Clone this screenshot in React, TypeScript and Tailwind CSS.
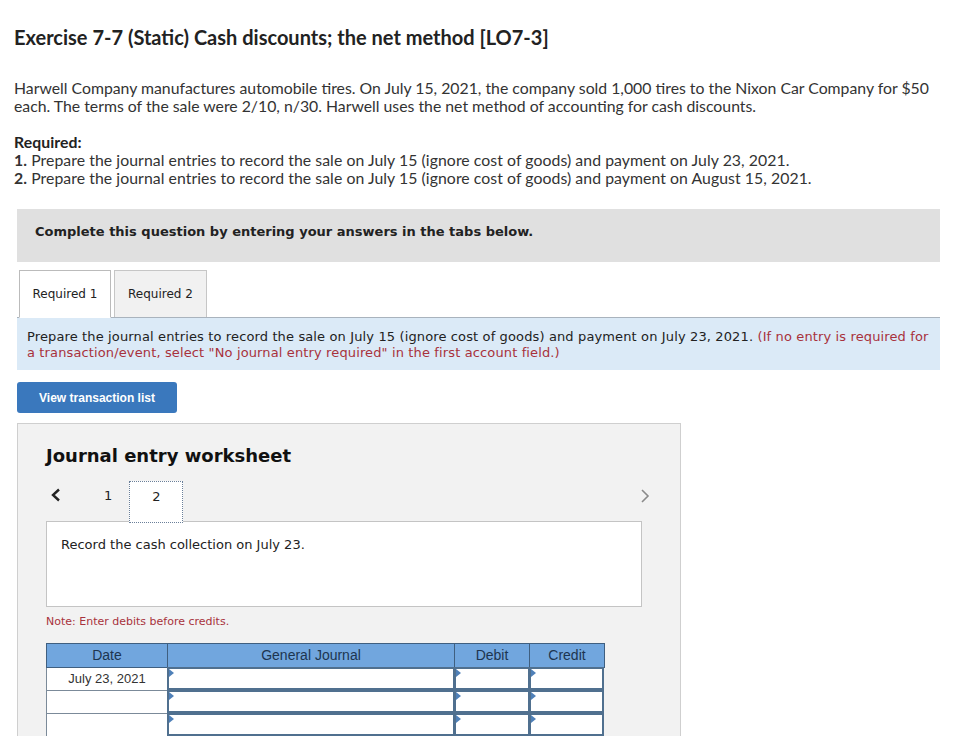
import React from "react";

const sans = { fontFamily: "Lato, 'Open Sans', sans-serif" };
const verdana = { fontFamily: "'DejaVu Sans', Verdana, sans-serif" };
const arial = { fontFamily: "'Liberation Sans', Arial, sans-serif" };

function Marker() {
  return (
    <span className="absolute left-0 top-0 w-0 h-0 border-y-[4px] border-y-transparent border-l-[5px] border-l-[#4f80b8]" />
  );
}

function InputCell({ w }: { w: string }) {
  return (
    <div className={`relative ${w} h-[23px] bg-white border-[2px] border-[#50708f] -ml-[1px] -mt-[1px]`}>
      <Marker />
    </div>
  );
}

function Row({ date }: { date?: string }) {
  return (
    <div className="flex">
      <div
        className="w-[122px] h-[23px] bg-white border border-[#7b8a99] border-t-0 text-[13px] text-[#333] flex items-center justify-center"
        style={arial}
      >
        {date}
      </div>
      <InputCell w="w-[288px]" />
      <InputCell w="w-[76px]" />
      <InputCell w="w-[75px]" />
    </div>
  );
}

export default function App() {
  return (
    <div className="w-[973px] h-[736px] overflow-hidden bg-white text-[#333]">
      <div className="pl-[14px] pr-[20px] pt-[26px]" style={sans}>
        <h1 className="text-[20px] leading-[22px] font-bold text-[#222]">
          Exercise 7-7 (Static) Cash discounts; the net method [LO7-3]
        </h1>
        <p className="mt-[31px] text-[15.8px] leading-[18px]">
          Harwell Company manufactures automobile tires. On July 15, 2021, the company sold 1,000 tires to the Nixon Car Company for $50
          <br />
          each. The terms of the sale were 2/10, n/30. Harwell uses the net method of accounting for cash discounts.
        </p>
        <div className="mt-[18px] text-[15.8px] leading-[18px] tracking-[0.06px]">
          <div className="font-bold text-[#222]">Required:</div>
          <div>
            <b>1.</b> Prepare the journal entries to record the sale on July 15 (ignore cost of goods) and payment on July 23, 2021.
          </div>
          <div>
            <b>2.</b> Prepare the journal entries to record the sale on July 15 (ignore cost of goods) and payment on August 15, 2021.
          </div>
        </div>
      </div>

      <div className="ml-[17px] w-[923px]" style={verdana}>
        <div className="mt-[22px] h-[53px] bg-[#e0e0e0] pl-[18px] pt-[10px]">
          <span className="text-[13px] font-bold text-[#222]">
            Complete this question by entering your answers in the tabs below.
          </span>
        </div>

        <div className="mt-[8px] flex items-end gap-[3px] pl-[2px] border-b border-[#a9b3bd]">
          <div className="w-[92px] h-[48px] -mb-[1px] bg-white border border-[#bbb] border-b-white flex items-center justify-center text-[12px] text-[#222]">
            Required 1
          </div>
          <div className="w-[93px] h-[47px] bg-[#f1f1f1] border border-[#c6c6c6] border-b-0 flex items-center justify-center text-[12px] text-[#222]">
            Required 2
          </div>
        </div>

        <div className="h-[52px] bg-[#dbeaf7] pl-[10px] pt-[11px] text-[13px] leading-[16px] tracking-[0.13px] text-[#222]">
          Prepare the journal entries to record the sale on July 15 (ignore cost of goods) and payment on July 23, 2021.{" "}
          <span className="text-[#a8323c]">
            (If no entry is required for
            <br />a transaction/event, select "No journal entry required" in the first account field.)
          </span>
        </div>

        <button
          className="mt-[12px] w-[160px] h-[31px] rounded-[3px] bg-[#3a78bd] text-white text-[12px] font-bold"
          style={arial}
        >
          View transaction list
        </button>

        <div className="mt-[10px] w-[664px] h-[340px] bg-[#f2f2f2] border border-[#cfcfcf] pl-[28px] pt-[20px]">
          <h2 className="text-[18px] leading-[24px] font-bold text-[#111]">Journal entry worksheet</h2>

          <div className="mt-[13px] flex items-start h-[41px] w-[596px] relative">
            <svg width="12" height="14" viewBox="0 0 12 14" className="mt-[7px] ml-[4px]">
              <path d="M9 1.5 L3 7 L9 12.5" fill="none" stroke="#222" strokeWidth="2.4" />
            </svg>
            <span className="ml-[42px] mt-[5px] text-[13px] text-[#222]">1</span>
            <div className="ml-[17px] w-[54px] h-[42px] bg-white border border-dotted border-[#6a7f99] flex justify-center pt-[5px] text-[13px] text-[#222] relative z-10">
              2
            </div>
            <svg width="12" height="16" viewBox="0 0 12 16" className="absolute right-[-9px] top-[7px]">
              <path d="M3 2 L9 8 L3 14" fill="none" stroke="#8a8a8a" strokeWidth="1.6" />
            </svg>
          </div>

          <div className="w-[596px] h-[86px] bg-white border border-[#c4c4c4] -mt-[1px] pl-[14px] pt-[13px] text-[13px] text-[#222]">
            Record the cash collection on July 23.
          </div>

          <div className="mt-[7px] text-[11px] text-[#a8323c]">Note: Enter debits before credits.</div>

          <div className="mt-[12px]">
            <div className="flex bg-[#71a6de] border border-[#3f5f80] w-[559px] h-[25px] text-[14px] text-[#1d3550]" style={arial}>
              <div className="w-[121px] flex items-center justify-center border-r border-[#3f5f80]">Date</div>
              <div className="w-[287px] flex items-center justify-center border-r border-[#3f5f80]">General Journal</div>
              <div className="w-[75px] flex items-center justify-center border-r border-[#3f5f80]">Debit</div>
              <div className="w-[74px] flex items-center justify-center">Credit</div>
            </div>
            <Row date="July 23, 2021" />
            <Row />
            <Row />
          </div>
        </div>
      </div>
    </div>
  );
}
